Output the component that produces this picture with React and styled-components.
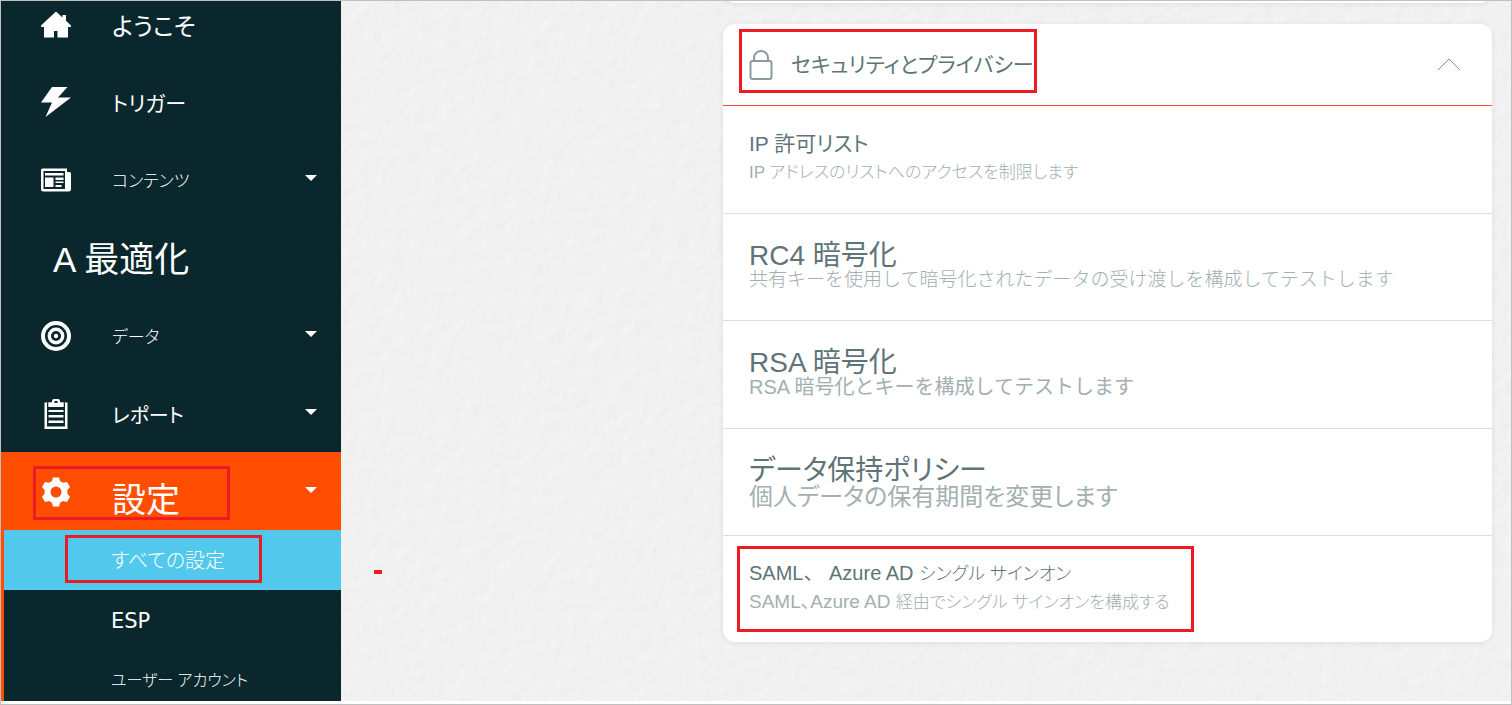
import React from "react";
import styled, { createGlobalStyle, css } from "styled-components";

const GlobalStyle = createGlobalStyle`
  * { box-sizing: border-box; }
  body {
    margin: 0;
    background: #ffffff;
    font-family: "Liberation Sans", "Noto Sans CJK JP", sans-serif;
  }
  ul { margin: 0; padding: 0; list-style: none; }
  h2, h3, p { margin: 0; font-weight: 400; }
`;

const proportional = css`
  font-feature-settings: "palt" 1;
`;

const Shell = styled.div`
  display: flex;
  min-height: 100vh;
  padding-bottom: 3px;
  border: 1px solid #c0c0c0;
`;

const Sidebar = styled.nav`
  flex: none;
  display: flex;
  flex-direction: column;
  width: 340px;
  background: #0a272d;
`;

const NavLink = styled.a`
  position: relative;
  display: flex;
  align-items: center;
  gap: 41px;
  height: ${(p) => (p.$first ? 61 : 78)}px;
  padding: 2px 24px ${(p) => (p.$first ? 14 : 0)}px ${(p) => (p.$plain ? 52 : 40)}px;
  background: ${(p) => (p.$active ? "#ff4e02" : "transparent")};
  color: #ffffff;
  text-decoration: none;
`;

const NavIcon = styled.svg`
  flex: none;
  width: 30px;
  height: 30px;
`;

const NavLabel = styled.span`
  flex: 1;
  padding-top: ${(p) => (p.$low ? 16 : 3)}px;
  font-size: ${(p) => p.$size}px;
  font-weight: ${(p) => (p.$thin ? 300 : 400)};
  line-height: 40px;
  white-space: nowrap;
  ${(p) => p.$tight && proportional}
`;

const Caret = styled.span`
  flex: none;
  margin-bottom: 4px;
  border: 6px solid transparent;
  border-top-color: #ffffff;
  border-bottom: 0;
`;

const SubMenu = styled.ul`
  flex: 1;
  border-left: 3px solid #ff4e02;

  li:last-child a { padding-bottom: 10px; }
`;

const SubLink = styled.a`
  position: relative;
  display: block;
  padding: 21px 24px 19px 107px;
  background: ${(p) => (p.$active ? "#52c8ec" : "transparent")};
  color: #ffffff;
  font-family: ${(p) => (p.$latin ? '"DejaVu Sans", sans-serif' : "inherit")};
  font-size: ${(p) => p.$size}px;
  font-weight: ${(p) => (p.$latin ? 400 : 300)};
  line-height: 20px;
  text-decoration: none;
  white-space: nowrap;
  ${proportional}
`;

const Callout = styled.span`
  position: absolute;
  top: ${(p) => p.$top}px;
  left: ${(p) => p.$left}px;
  width: ${(p) => p.$width}px;
  height: ${(p) => p.$height}px;
  border: 3px solid #ed1c24;
  pointer-events: none;
`;

const Main = styled.main`
  position: relative;
  flex: 1;
  min-width: 0;
  overflow: hidden;
  padding: 0 19px 59px 382px;
  background: #f2f2f2;
`;

const Paper = styled.svg`
  position: absolute;
  inset: 0;
  width: 100%;
  height: 100%;
`;

const Dash = styled.span`
  position: absolute;
  top: 569px;
  left: 33px;
  width: 8px;
  height: 4px;
  background: #ed1c24;
`;

const Card = styled.section`
  position: relative;
  border-radius: 12px;
  background: #ffffff;
  box-shadow: 0 1px 6px rgba(0, 0, 0, 0.08);
`;

const PreviousCard = styled(Card)`
  height: 24px;
  margin: -22px 0 21px;
`;

const CardHeader = styled.button`
  position: relative;
  display: flex;
  align-items: center;
  width: 100%;
  height: 82px;
  padding: 0 31px 0 26px;
  border: 0;
  border-bottom: 1px solid #f4511e;
  background: transparent;
  color: #5f7478;
  font: inherit;
  text-align: left;
  cursor: pointer;
`;

const LockIcon = styled.svg`
  flex: none;
  width: 24px;
  height: 30px;
  margin-right: 18px;
`;

const CardTitle = styled.span`
  flex: 1;
  font-size: 21px;
  line-height: 28px;
  white-space: nowrap;
  ${proportional}
`;

const Chevron = styled.svg`
  flex: none;
  width: 24px;
  height: 13px;
`;

const Settings = styled.ul`
  display: grid;
  grid-auto-rows: 1fr;
  min-height: 536px;
`;

const Setting = styled.li`
  position: relative;
  padding: 26px 26px 0;

  & + & { border-top: 1px solid #dcdfe0; padding-top: 25px; }
`;

const SettingTitle = styled.h3`
  height: 24px;
  color: #5f7478;
  font-size: ${(p) => p.$size}px;
  line-height: ${(p) => (p.$size > 24 ? 34 : 24)}px;
  white-space: nowrap;
  ${(p) => p.$tight && proportional}
`;

const SettingText = styled.p`
  color: #a3afb1;
  font-size: ${(p) => p.$size}px;
  font-weight: ${(p) => (p.$thin ? 300 : 400)};
  line-height: ${(p) => (p.$size > 22 ? 38 : 34)}px;
  white-space: nowrap;
  ${(p) => p.$tight && proportional}
`;

const Tight = styled.span`
  font-size: ${(p) => p.$size}px;
  font-weight: 300;
  ${proportional}
`;

const icons = {
  home: (
    <path
      fill="#fff"
      d="M15 0.500 0 14.500V16h3v10.500h10V20h3.500v6.500H27V16h3v-1.500l-5-4.700V4h-3.500v2.500z"
    />
  ),
  bolt: <path fill="#fff" d="M11 0h15.500L17 10.500h13L4.500 30l6.500-14.500H0z" />,
  news: (
    <g>
      <path fill="#fff" d="M1.500 3.500H26V7h2.500Q30 7 30 8.500V24q0 2.500-2.500 2.500h-25Q0 26.500 0 24V5q0-1.500 1.500-1.500z" />
      <path fill="#0a272d" d="M2.500 6h21.500v18H2.500z" />
      <path fill="#fff" d="M4 8h18.500v2.500H4zM4 12.500h8.500V22H4zM14.500 12.500h8V15h-8zM14.500 16.500h8V18h-8zM14.500 20h6v2h-6z" />
    </g>
  ),
  target: (
    <g fill="none" stroke="#fff">
      <circle cx="15" cy="15" r="13" strokeWidth="4" />
      <circle cx="15" cy="15" r="6.700" strokeWidth="3.400" />
      <circle cx="15" cy="15" r="2.200" fill="#fff" stroke="none" />
    </g>
  ),
  clipboard: (
    <g>
      <path fill="#fff" d="M3.500 3.500h23V30h-23z" />
      <path fill="#0a272d" d="M6 3.500h1.500V8h15V3.500H24v24H6z" />
      <path fill="#fff" d="M7.500 3.500H11V2q0-2 2-2h4q2 0 2 2v1.500h3.500V7.500h-15zM7.500 11h15v2h-15zM7.500 16h15v2.500h-15zM7.500 21.500h15V24h-15z" />
      <path fill="#0a272d" d="M13.500 2h3v2h-3z" />
    </g>
  ),
  gear: (
    <path
      fill="#fff"
      fillRule="evenodd"
      d="M12 0.500h6l1.300 3.800 2.700 1.500 4-0.900 3 5.200-2.600 3v3.600l2.600 3-3 5.200-4-0.900-2.700 1.500L18 29.500h-6l-1.300-4-2.700-1.500-4 0.900-3-5.200 2.600-3v-3.600l-2.600-3 3-5.200 4 0.900 2.700-1.500zM15 9.500a5.500 5.500 0 1 0 0 11 5.500 5.500 0 1 0 0-11z"
    />
  ),
};

const navItems = [
  { label: "ようこそ", icon: "home", size: 24, tight: true, first: true },
  { label: "トリガー", icon: "bolt", size: 21, tight: true },
  { label: "コンテンツ", icon: "news", size: 17, tight: true, thin: true, menu: true },
  { label: "A 最適化", size: 35 },
  { label: "データ", icon: "target", size: 17, tight: true, thin: true, menu: true },
  { label: "レポート", icon: "clipboard", size: 20, tight: true, menu: true },
  { label: "設定", icon: "gear", size: 34, active: true, low: true, menu: true },
];

function NavItem({ item }) {
  return (
    <li>
      <NavLink href="#" $first={item.first} $plain={!item.icon} $active={item.active}>
        {item.icon && (
          <NavIcon viewBox="0 0 30 30" aria-hidden="true">
            {icons[item.icon]}
          </NavIcon>
        )}
        <NavLabel $size={item.size} $tight={item.tight} $thin={item.thin} $low={item.low}>
          {item.label}
        </NavLabel>
        {item.menu && <Caret />}
        {item.active && <Callout $top={14} $left={32} $width={197} $height={54} />}
      </NavLink>
    </li>
  );
}

export default function App() {
  return (
    <>
      <GlobalStyle />
      <Shell>
        <Sidebar>
          <ul>
            {navItems.map((item) => (
              <NavItem key={item.label} item={item} />
            ))}
          </ul>
          <SubMenu>
            <li>
              <SubLink href="#" $active $size={20}>
                すべての設定
                <Callout $top={5} $left={61} $width={197} $height={48} />
              </SubLink>
            </li>
            <li>
              <SubLink href="#" $latin $size={21}>ESP</SubLink>
            </li>
            <li>
              <SubLink href="#" $size={16}>ユーザー アカウント</SubLink>
            </li>
          </SubMenu>
        </Sidebar>
        <Main>
          <Paper aria-hidden="true">
            <filter id="paper" x="0" y="0" width="100%" height="100%" colorInterpolationFilters="sRGB">
              <feTurbulence type="fractalNoise" baseFrequency="0.07" numOctaves="3" seed="4" result="noise" />
              <feDiffuseLighting in="noise" lightingColor="#f6f6f6" surfaceScale="0.14" diffuseConstant="1.13">
                <feDistantLight azimuth="225" elevation="60" />
              </feDiffuseLighting>
            </filter>
            <rect width="100%" height="100%" filter="url(#paper)" />
          </Paper>
          <Dash />
          <PreviousCard />
          <Card>
            <h2>
              <CardHeader type="button" aria-expanded="true">
                <LockIcon viewBox="0 0 24 30" fill="none" stroke="#8b9b9d" strokeWidth="2" aria-hidden="true">
                  <rect x="1.500" y="11" width="21" height="18" rx="2" />
                  <path d="M5 11V8a7 7 0 0 1 14 0v3" />
                </LockIcon>
                <CardTitle>セキュリティとプライバシー</CardTitle>
                <Chevron viewBox="0 0 24 13" fill="none" stroke="#7f9093" strokeWidth="1" aria-hidden="true">
                  <path d="M1 12 12 1l11 11" />
                </Chevron>
                <Callout $top={5} $left={16} $width={298} $height={64} />
              </CardHeader>
            </h2>
            <Settings>
              <Setting>
                <SettingTitle $size={21} $tight>IP 許可リスト</SettingTitle>
                <SettingText $size={17} $tight $thin>IP アドレスのリストへのアクセスを制限します</SettingText>
              </Setting>
              <Setting>
                <SettingTitle $size={28}>RC4 暗号化</SettingTitle>
                <SettingText $size={19} $thin>共有キーを使用して暗号化されたデータの受け渡しを構成してテストします</SettingText>
              </Setting>
              <Setting>
                <SettingTitle $size={28}>RSA 暗号化</SettingTitle>
                <SettingText $size={20}>RSA 暗号化とキーを構成してテストします</SettingText>
              </Setting>
              <Setting>
                <SettingTitle $size={28} $tight>データ保持ポリシー</SettingTitle>
                <SettingText $size={24} $tight>個人データの保有期間を変更します</SettingText>
              </Setting>
              <Setting>
                <SettingTitle $size={20}>
                  SAML、 Azure AD <Tight $size={18}>シングル サインオン</Tight>
                </SettingTitle>
                <SettingText $size={19} $tight>
                  SAML、Azure AD <Tight $size={17}>経由でシングル サインオンを構成する</Tight>
                </SettingText>
                <Callout $top={10} $left={14} $width={457} $height={86} />
              </Setting>
            </Settings>
          </Card>
        </Main>
      </Shell>
    </>
  );
}
